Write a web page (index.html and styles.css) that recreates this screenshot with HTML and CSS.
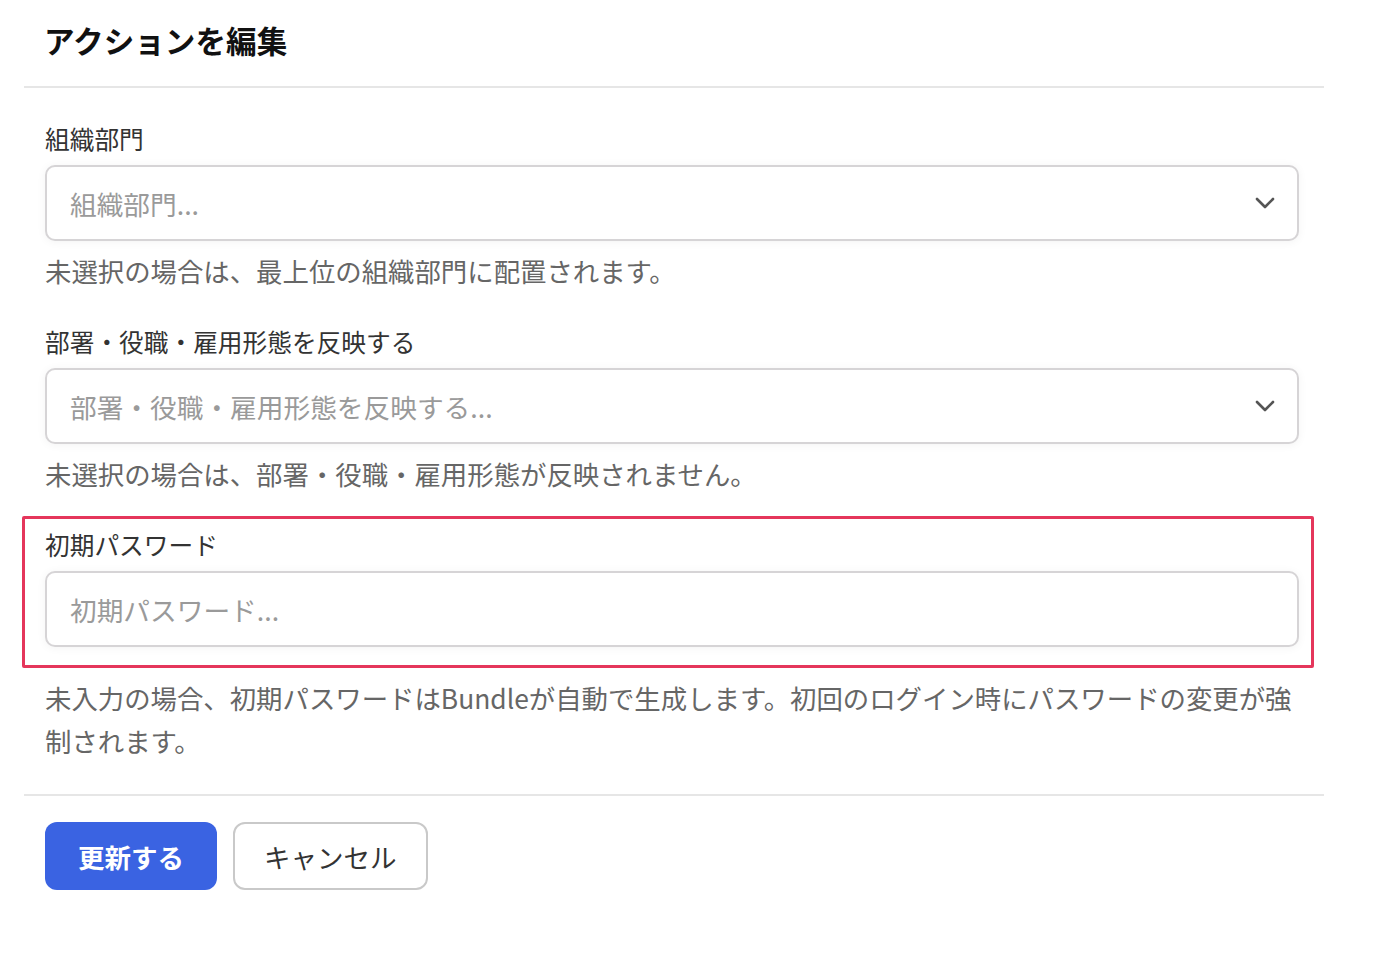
FILE: index.html
```html
<!DOCTYPE html>
<html lang="ja">
<head>
  <meta charset="UTF-8" />
  <title>アクションを編集</title>
  <link rel="stylesheet" href="styles.css">
</head>
<body>
  <div class="panel">
    <div class="panel-header">
      <h2>アクションを編集</h2>
    </div>

    <div class="panel-body">
      <div class="field">
        <label>組織部門</label>
        <div class="select">
          <span class="placeholder">組織部門...</span>
          <svg class="chevron" width="20" height="12" viewBox="0 0 20 12"><path d="M2 2 L10 10 L18 2" fill="none" stroke="#555" stroke-width="2.6" stroke-linecap="round" stroke-linejoin="round"/></svg>
        </div>
        <p class="help">未選択の場合は、最上位の組織部門に配置されます。</p>
      </div>

      <div class="field">
        <label>部署・役職・雇用形態を反映する</label>
        <div class="select">
          <span class="placeholder">部署・役職・雇用形態を反映する...</span>
          <svg class="chevron" width="20" height="12" viewBox="0 0 20 12"><path d="M2 2 L10 10 L18 2" fill="none" stroke="#555" stroke-width="2.6" stroke-linecap="round" stroke-linejoin="round"/></svg>
        </div>
        <p class="help">未選択の場合は、部署・役職・雇用形態が反映されません。</p>
      </div>

      <div class="field">
        <div class="highlight-wrap">
          <label>初期パスワード</label>
          <input type="text" class="text-input" placeholder="初期パスワード..." />
          <div class="highlight"></div>
        </div>
        <p class="help help-spaced">未入力の場合、初期パスワードはBundleが自動で生成します。初回のログイン時にパスワードの変更が強制されます。</p>
      </div>
    </div>

    <div class="panel-footer">
      <button class="btn btn-primary">更新する</button>
      <button class="btn btn-secondary">キャンセル</button>
    </div>
  </div>
</body>
</html>
```

FILE: styles.css
```css
* { box-sizing: border-box; }

body {
  margin: 0;
  background: #fff;
  color: #222;
  font-family: "Noto Sans CJK JP", "Noto Sans", sans-serif;
}

.panel {
  width: 1300px;
  margin-left: 24px;
}

.panel-header {
  padding: 20px 20px 26px;
  border-bottom: 2px solid #e6e6e6;
}

.panel-header h2 {
  margin: 0;
  font-size: 30.6px;
  line-height: 40px;
  font-weight: bold;
  color: #111;
}

.panel-body {
  padding: 33px 25px 0 21px;
  border-bottom: 2px solid #e6e6e6;
}

.field {
  margin-bottom: 32px;
}

.field label {
  display: block;
  font-size: 24.7px;
  line-height: 34px;
  color: #333;
  margin-bottom: 10px;
}

.select,
.text-input {
  display: flex;
  align-items: center;
  justify-content: space-between;
  width: 100%;
  height: 76px;
  padding: 0 22px 0 23px;
  border: 2px solid #d6d4d6;
  border-radius: 10px;
  background: #fff;
  box-shadow: 0 1px 10px rgba(0, 0, 0, 0.05);
}

.placeholder,
.text-input::placeholder {
  font-size: 26.7px;
  color: #9a9a9a;
}

.text-input {
  font-family: inherit;
  font-size: 26.7px;
  outline: none;
}

.help {
  margin: 8px 0 0;
  font-size: 26.4px;
  line-height: 43px;
  color: #666;
}

.help-spaced {
  margin-top: 29px;
}

.highlight-wrap {
  position: relative;
}

.highlight {
  position: absolute;
  top: -11px;
  left: -23px;
  right: -15px;
  bottom: -21px;
  border: 3px solid #e5365b;
  border-radius: 2px;
  pointer-events: none;
}

.panel-footer {
  display: flex;
  gap: 16px;
  padding: 26px 21px;
}

.btn {
  height: 68px;
  font-family: inherit;
  font-size: 26.5px;
  border-radius: 12px;
  cursor: pointer;
}

.btn-primary {
  background: #3a63e2;
  border: none;
  color: #fff;
  font-weight: bold;
  padding: 0 33px;
}

.btn-secondary {
  background: #fff;
  border: 2px solid #c9c9c9;
  color: #333;
  padding: 0 29px;
}
```
